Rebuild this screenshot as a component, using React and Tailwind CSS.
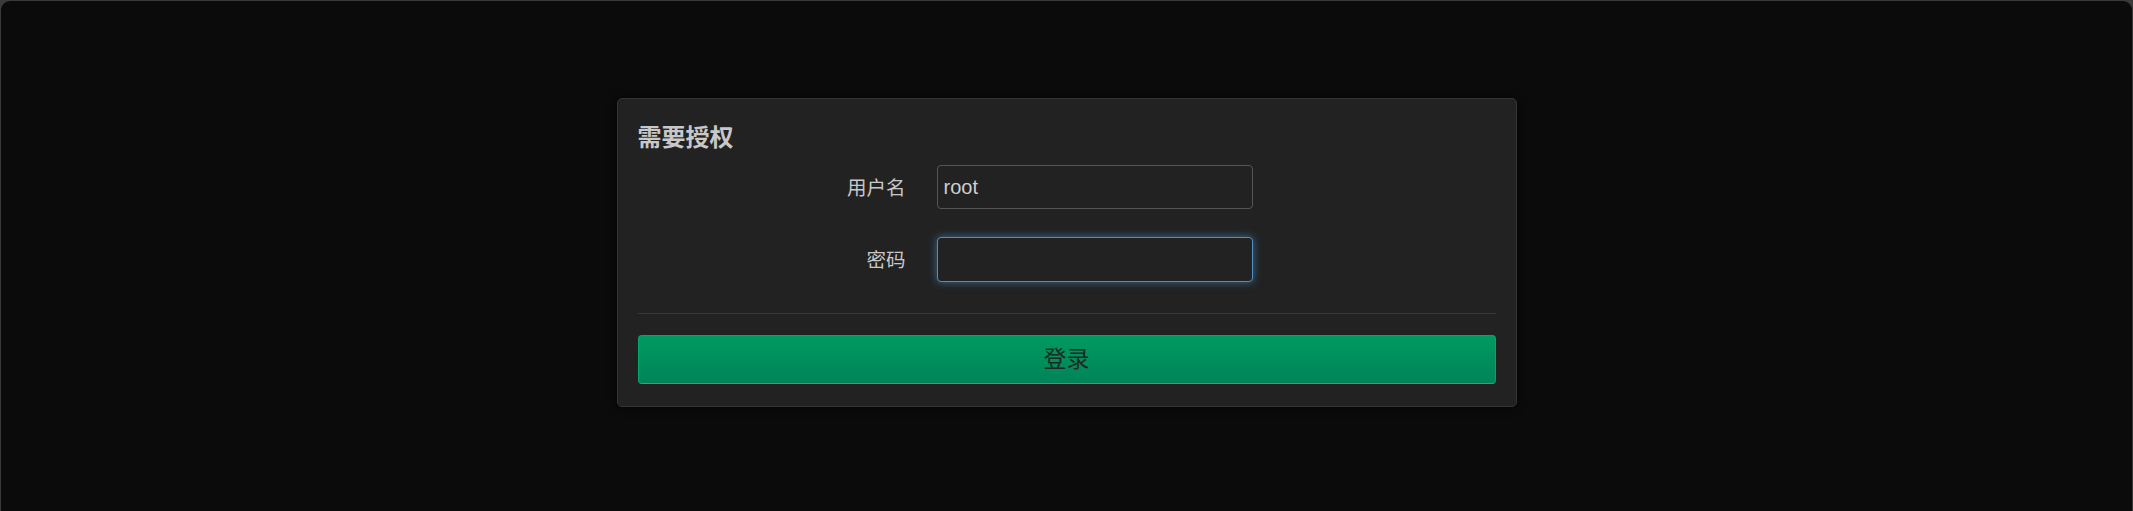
import React from 'react';

export default function App() {
  const font = { fontFamily: '"Liberation Sans", "Noto Sans CJK SC", sans-serif' };

  return (
    <div className="h-[511px] w-full bg-[#3a3a3a] px-px pt-px overflow-hidden" style={font}>
      <div className="h-full w-full bg-[#0b0b0b] rounded-t-[9px] flex justify-center pt-[97px]">
        {/* Login card */}
        <div className="w-[900px] h-[309px] self-start bg-[#222222] border border-[#353535] rounded-[5px] shadow-[0_0_10px_rgba(0,0,0,0.7)] px-5 pt-[26px]">
          <h2 className="text-[24px] leading-[26px] font-bold text-[#c8c8c8]">需要授权</h2>

          <div className="flex flex-col gap-[28px] mt-[14px]">
            <div className="flex items-center">
              <label className="w-[299px] text-right text-[19.5px] text-[#c8c8c8] pr-[31px] pt-[3px]">用户名</label>
              <div className="w-[316px] h-[44px] rounded-[4px] border border-[#555555] bg-[#222222] flex items-center px-[6px] text-[20px] text-[#cfcfcf]">
                root
              </div>
            </div>
            <div className="flex items-center">
              <label className="w-[299px] text-right text-[19.5px] text-[#c8c8c8] pr-[31px] pt-[3px]">密码</label>
              <div className="w-[316px] h-[45px] rounded-[4px] border border-[#4f8fc6] bg-[#222222] shadow-[0_0_8px_rgba(82,168,236,0.55)]" />
            </div>
          </div>

          <div className="h-px bg-[#383838] mt-[31px]" />

          <button className="mt-[21px] w-full h-[49px] rounded-[4px] border border-[#00a96a] border-b-[#00c070] bg-gradient-to-b from-[#009a61] to-[#008459] text-[23px] text-[#1c2a22] flex items-center justify-center">
            登录
          </button>
        </div>
      </div>
    </div>
  );
}
